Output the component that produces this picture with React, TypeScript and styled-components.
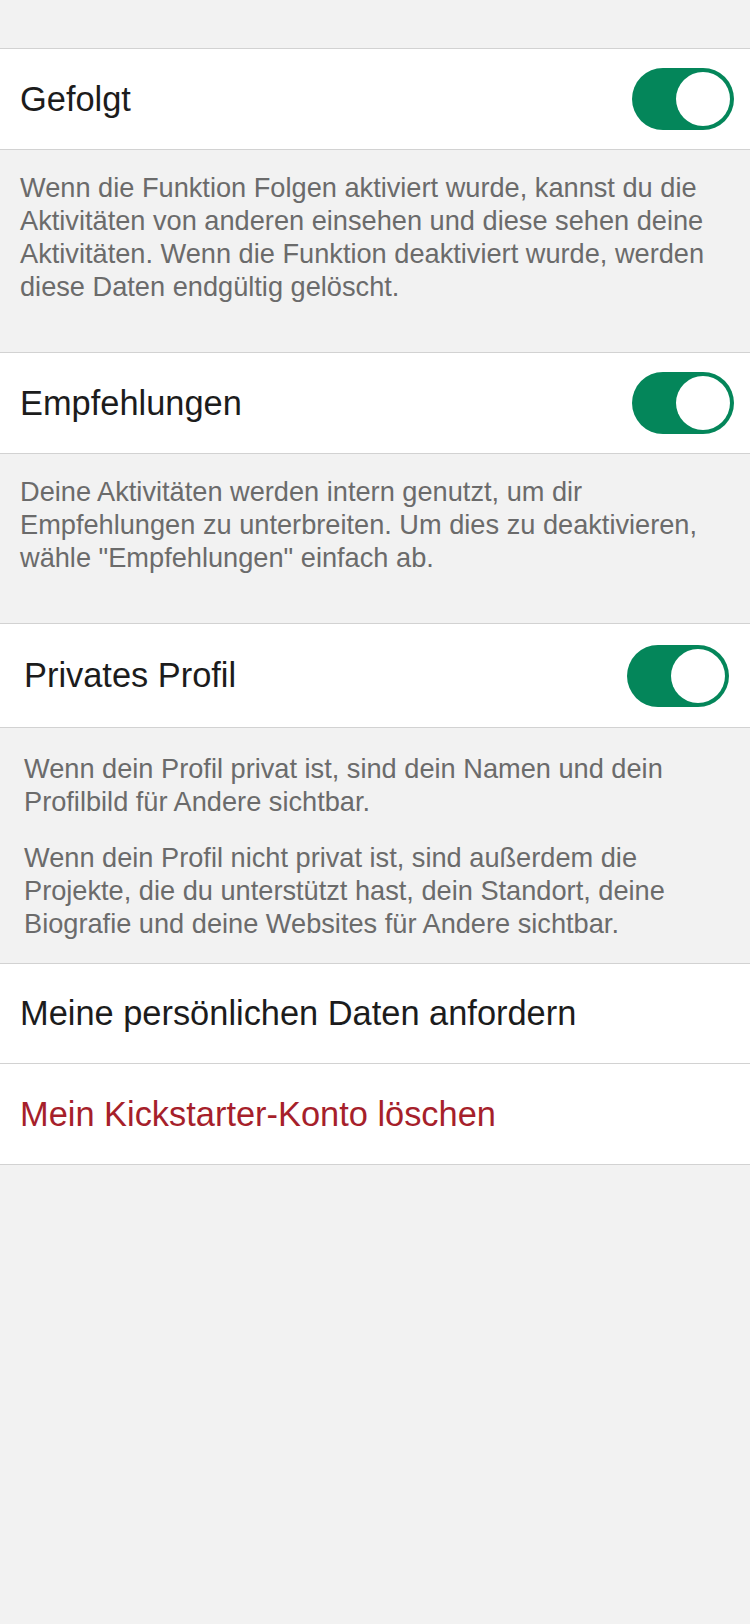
import styled, { createGlobalStyle } from 'styled-components';

const GlobalStyle = createGlobalStyle`
  body {
    margin: 0;
    background: #f2f2f2;
    font-family: "Liberation Sans", Arial, sans-serif;
    -webkit-font-smoothing: antialiased;
  }
`;

const Page = styled.div`
  min-height: 1624px;
  box-sizing: border-box;
  padding-top: 48px;
  background: #f2f2f2;
`;

const Row = styled.div<{ $inset?: boolean; $height?: number }>`
  display: flex;
  align-items: center;
  justify-content: space-between;
  height: ${props => props.$height || 100}px;
  padding: 0 ${props => props.$inset ? 21 : 16}px 0 ${props => props.$inset ? 24 : 20}px;
  background: #fff;
  border-top: 1px solid #d2d2d2;
  border-bottom: 1px solid #d2d2d2;

  & + & {
    border-top: none;
  }
`;

const Label = styled.span<{ $danger?: boolean }>`
  font-size: 34.4px;
  color: ${props => props.$danger ? '#a61f2b' : '#1c1c1c'};
`;

const Toggle = styled.span<{ $on?: boolean }>`
  position: relative;
  flex: none;
  width: 102px;
  height: 62px;
  border-radius: 31px;
  background: ${props => props.$on ? '#04865a' : '#e5e5e5'};

  &::after {
    content: '';
    position: absolute;
    top: 4px;
    left: ${props => props.$on ? 44 : 4}px;
    width: 54px;
    height: 54px;
    border-radius: 50%;
    background: #fff;
  }
`;

const Footnote = styled.div<{ $inset?: boolean }>`
  display: flex;
  flex-direction: column;
  gap: 23px;
  padding: ${props => props.$inset ? '24px 20px 23px 24px' : '21px 20px 49px 20px'};
`;

const Text = styled.p`
  margin: 0;
  font-size: 27.2px;
  line-height: 33px;
  color: #6b6b6b;
`;

export default function App() {
  return (
    <>
      <GlobalStyle />
      <Page>
        <Row>
          <Label>Gefolgt</Label>
          <Toggle $on />
        </Row>
        <Footnote>
          <Text>
            Wenn die Funktion Folgen aktiviert wurde, kannst du die Aktivitäten von anderen einsehen und diese sehen deine Aktivitäten. Wenn die Funktion deaktiviert wurde, werden diese Daten endgültig gelöscht.
          </Text>
        </Footnote>

        <Row>
          <Label>Empfehlungen</Label>
          <Toggle $on />
        </Row>
        <Footnote>
          <Text>
            Deine Aktivitäten werden intern genutzt, um dir Empfehlungen zu unterbreiten. Um dies zu deaktivieren, wähle "Empfehlungen" einfach ab.
          </Text>
        </Footnote>

        <Row $inset $height={103}>
          <Label>Privates Profil</Label>
          <Toggle $on />
        </Row>
        <Footnote $inset>
          <Text>
            Wenn dein Profil privat ist, sind dein Namen und dein Profilbild für Andere sichtbar.
          </Text>
          <Text>
            Wenn dein Profil nicht privat ist, sind außerdem die Projekte, die du unterstützt hast, dein Standort, deine Biografie und deine Websites für Andere sichtbar.
          </Text>
        </Footnote>

        <Row $height={99}>
          <Label>Meine persönlichen Daten anfordern</Label>
        </Row>
        <Row>
          <Label $danger>Mein Kickstarter-Konto löschen</Label>
        </Row>
      </Page>
    </>
  );
}
